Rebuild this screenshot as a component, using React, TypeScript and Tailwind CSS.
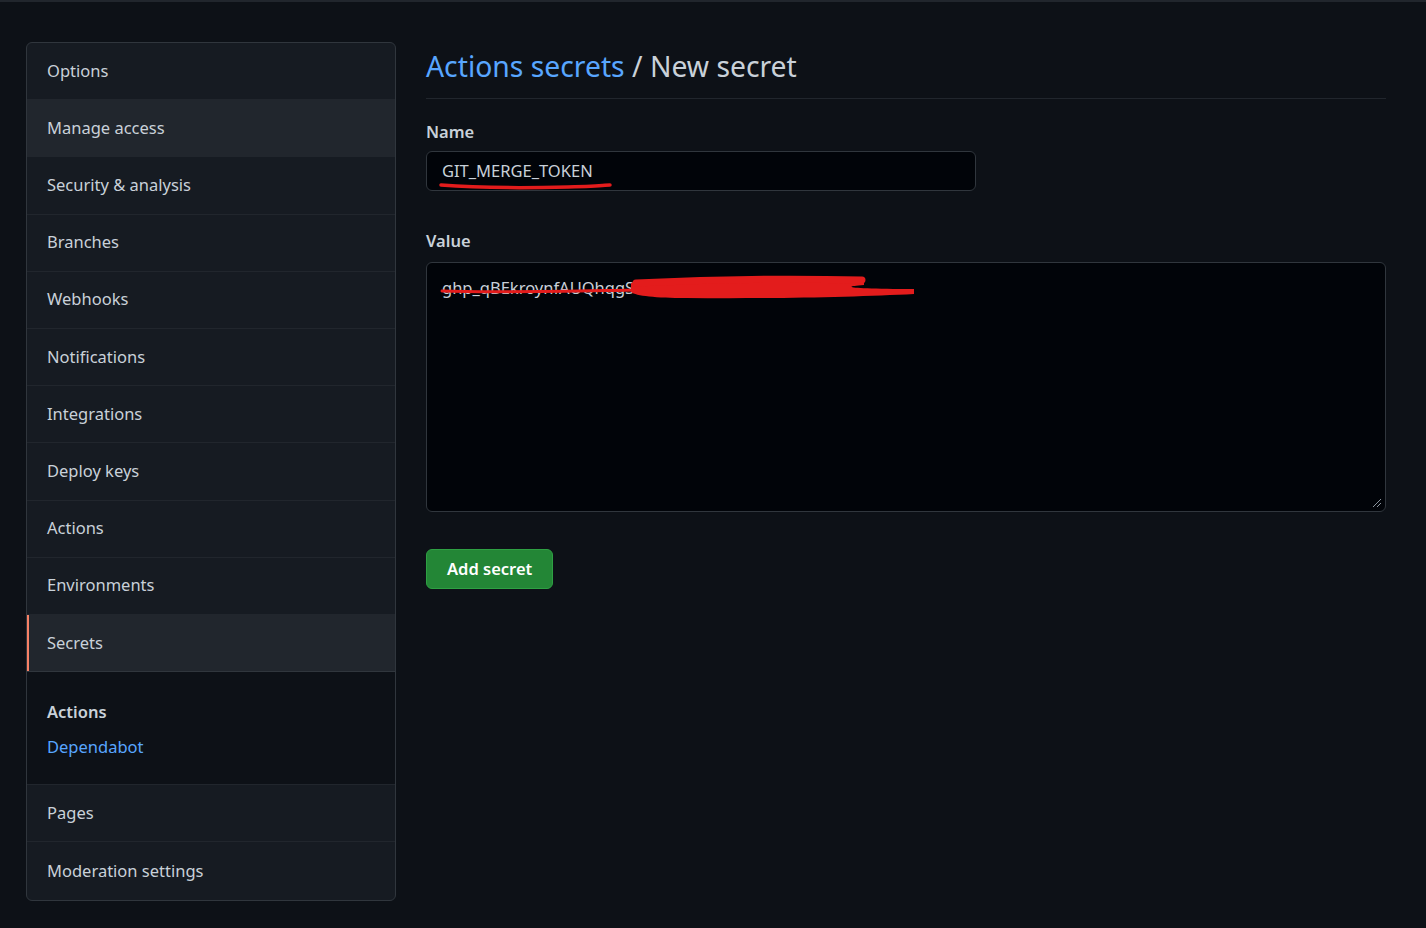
const items = [
  "Options",
  "Manage access",
  "Security & analysis",
  "Branches",
  "Webhooks",
  "Notifications",
  "Integrations",
  "Deploy keys",
  "Actions",
  "Environments",
];

function Row({ label, hover, selected }: { label: string; hover?: boolean; selected?: boolean }) {
  return (
    <div
      className={`relative flex h-[57.2px] items-center border-b border-[#21262d] px-5 text-[16.5px] text-[#c9d1d9] ${
        hover || selected ? "bg-[#21262d]" : ""
      } ${selected ? "border-b-[#30363d]" : ""}`}
    >
      {selected && <span className="absolute inset-y-0 left-0 w-[2px] bg-[#f78166]" />}
      {label}
    </div>
  );
}

export default function App() {
  return (
    <div
      className="min-h-[928px] border-t-2 border-[#21262d] bg-[#0d1117] text-[#c9d1d9]"
      style={{ fontFamily: '"Noto Sans", "Open Sans", sans-serif' }}
    >
      <div className="flex gap-[30px] pl-[26px] pr-[40px] pt-[40px]">
        {/* sidebar */}
        <nav className="w-[370px] shrink-0 overflow-hidden rounded-[6px] border border-[#30363d] bg-[#161b22]">
          {items.map((l, i) => (
            <Row key={l} label={l} hover={i === 1} />
          ))}
          <Row label="Secrets" selected />
          <div className="flex h-[113px] flex-col justify-center gap-[10px] border-b border-[#21262d] bg-[#0d1117] px-5 pt-[4px] text-[16.5px]">
            <div className="font-semibold text-[#c9d1d9]">Actions</div>
            <div className="text-[#58a6ff]">Dependabot</div>
          </div>
          <Row label="Pages" />
          <div className="flex h-[58px] items-center px-5 text-[16.5px] text-[#c9d1d9]">Moderation settings</div>
        </nav>

        {/* main */}
        <main className="flex-1">
          <div className="border-b border-[#21262d] pb-[10px] pt-[2px]">
            <h1 className="text-[28.3px] font-normal leading-[44px]">
              <span className="text-[#58a6ff]">Actions secrets</span>
              <span className="text-[#c9d1d9]"> / New secret</span>
            </h1>
          </div>

          <div className="mt-[20px] text-[16.5px] font-semibold leading-[26px]">Name</div>
          <div className="relative mt-[6px] w-[550px]">
            <div className="flex h-[40px] items-center rounded-[6px] border border-[#30363d] bg-[#010409] px-[15px] text-[16.5px] text-[#c9d1d9]">
              GIT_MERGE_TOKEN
            </div>
            <svg className="pointer-events-none absolute left-[12px] top-[30px]" width="176" height="10" viewBox="0 0 176 10">
              <path d="M3 4 C 40 7, 90 7, 130 6 S 165 4, 172 4" stroke="#e31c1c" strokeWidth="3.5" fill="none" strokeLinecap="round" />
            </svg>
          </div>

          <div className="mt-[37px] text-[16.5px] font-semibold leading-[26px]">Value</div>
          <div className="relative mt-[8px]">
            <div className="relative h-[250px] rounded-[6px] border border-[#30363d] bg-[#010409] px-[15px] pt-[13px] text-[16.5px] text-[#c9d1d9]">
              ghp_qBEkroynfAUQhqgS
              <svg className="absolute bottom-[3px] right-[3px]" width="10" height="10" viewBox="0 0 10 10">
                <path d="M9 1 L1 9 M9 5 L5 9" stroke="#8b949e" strokeWidth="1" />
              </svg>
            </div>
            <svg className="pointer-events-none absolute left-[10px] top-[6px]" width="500" height="36" viewBox="0 0 500 36">
              <path d="M6 23 C 60 25, 140 23, 205 22" stroke="#e31c1c" strokeWidth="3" fill="none" strokeLinecap="round" />
              <path
                d="M195 15 C 260 11, 360 9, 428 10 L 428 17 C 400 19, 420 21, 478 21 L 478 26 C 420 29, 330 31, 250 30 C 220 30, 200 28, 195 24 Z"
                fill="#e31c1c"
              />
              <path d="M200 15 C 260 12, 340 10, 426 12" stroke="#e31c1c" strokeWidth="7" fill="none" strokeLinecap="round" />
            </svg>
          </div>

          <button className="mt-[37px] flex h-[40px] items-center rounded-[6px] border border-[#2ea043] bg-[#238636] px-[20px] text-[16.5px] font-semibold text-white">
            Add secret
          </button>
        </main>
      </div>
    </div>
  );
}
